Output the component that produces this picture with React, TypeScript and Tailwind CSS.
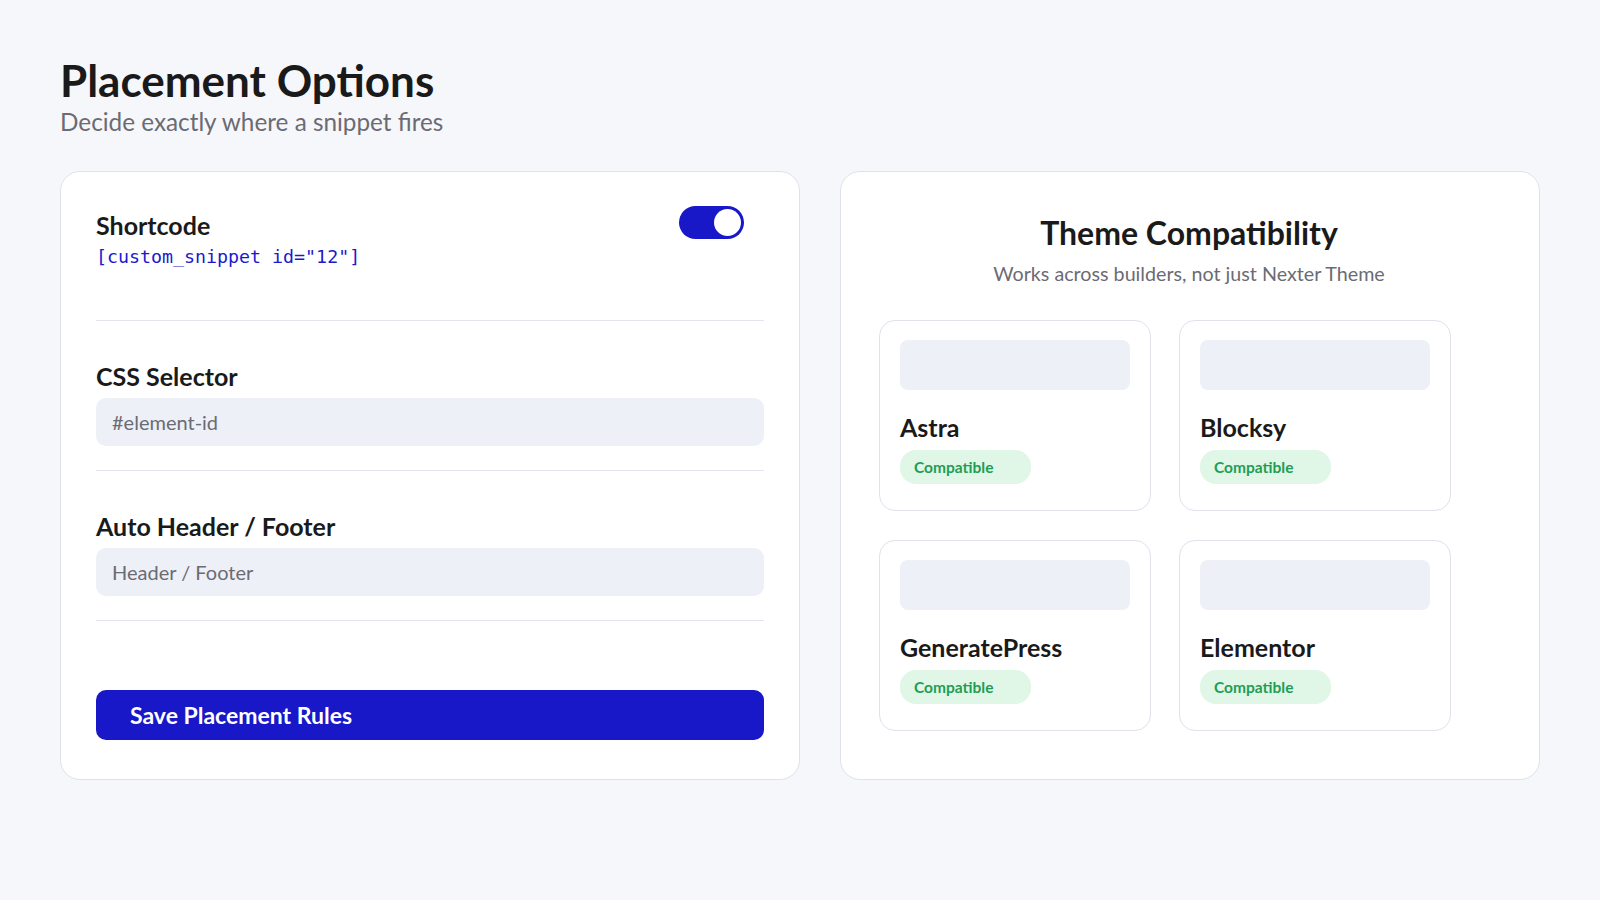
import React from "react";

const themes = ["Astra", "Blocksy", "GeneratePress", "Elementor"];

function ThemeCard({ name }: { name: string }) {
  return (
    <div className="rounded-2xl border border-[#e0e2ec] bg-white px-5 pt-[19px] pb-[26px]">
      <div className="h-[50px] rounded-lg bg-[#edf0f7]" />
      <div className="mt-[22px] text-[25px] font-bold leading-[30px] text-[#1a1a1a]">{name}</div>
      <div className="mt-2 flex h-[34px] w-[131px] items-center rounded-2xl bg-[#e0f6e7] pl-[14px] text-[15.5px] font-bold text-[#1f9d55]">
        Compatible
      </div>
    </div>
  );
}

export default function App() {
  return (
    <div className="min-h-screen bg-[#f6f7fb] px-[60px] pt-[54px] font-['Lato',sans-serif] text-[#1a1a1a]">
      <h1 className="text-[44px] font-bold leading-[1.2]">Placement Options</h1>
      <p className="text-[24.3px] leading-[1.2] text-[#6b6b73]">Decide exactly where a snippet fires</p>

      <div className="mt-[35px] grid grid-cols-[740px_700px] gap-10">
        {/* Left card */}
        <div className="rounded-[20px] border border-[#dfe2ec] bg-white px-[35px] pt-[34px] pb-[39px]">
          <div className="flex items-start justify-between border-b border-[#e3e4ee] pb-[49px]">
            <div className="mt-1">
              <div className="text-[25px] font-bold leading-[30px]">Shortcode</div>
              <div className="mt-[3px] font-['DejaVu_Sans_Mono',monospace] text-[18.3px] leading-7 text-[#1a1acc]">
                [custom_snippet id="12"]
              </div>
            </div>
            <div className="mr-5 flex h-[33px] w-[65px] items-center justify-end rounded-full bg-[#1818c8] pr-[3px]">
              <div className="h-[27px] w-[27px] rounded-full bg-white" />
            </div>
          </div>

          <div className="border-b border-[#e3e4ee] pt-10 pb-6">
            <div className="text-[25px] font-bold leading-[30px]">CSS Selector</div>
            <div className="mt-[7px] flex h-12 items-center rounded-[10px] bg-[#edf0f7] px-4 text-[20px] text-[#6b6b73]">
              #element-id
            </div>
          </div>

          <div className="border-b border-[#e3e4ee] pt-10 pb-6">
            <div className="text-[25px] font-bold leading-[30px]">Auto Header / Footer</div>
            <div className="mt-[7px] flex h-12 items-center rounded-[10px] bg-[#edf0f7] px-4 text-[20px] text-[#6b6b73]">
              Header / Footer
            </div>
          </div>

          <button className="mt-[69px] flex h-[50px] w-full items-center rounded-[10px] bg-[#1818c8] px-[34px] text-[23px] font-bold text-white">
            Save Placement Rules
          </button>
        </div>

        {/* Right card */}
        <div className="rounded-[20px] border border-[#dfe2ec] bg-white pl-[38px] pr-10 pt-[42px] pb-10">
          <h2 className="text-center text-[32px] font-bold leading-[1.2]">Theme Compatibility</h2>
          <p className="mt-2 text-center text-[19.7px] leading-[27px] text-[#6b6b73]">
            Works across builders, not just Nexter Theme
          </p>
          <div className="mt-[33px] grid grid-cols-[272px_272px] gap-x-7 gap-y-[29px]">
            {themes.map((t) => (
              <ThemeCard key={t} name={t} />
            ))}
          </div>
        </div>
      </div>
    </div>
  );
}
